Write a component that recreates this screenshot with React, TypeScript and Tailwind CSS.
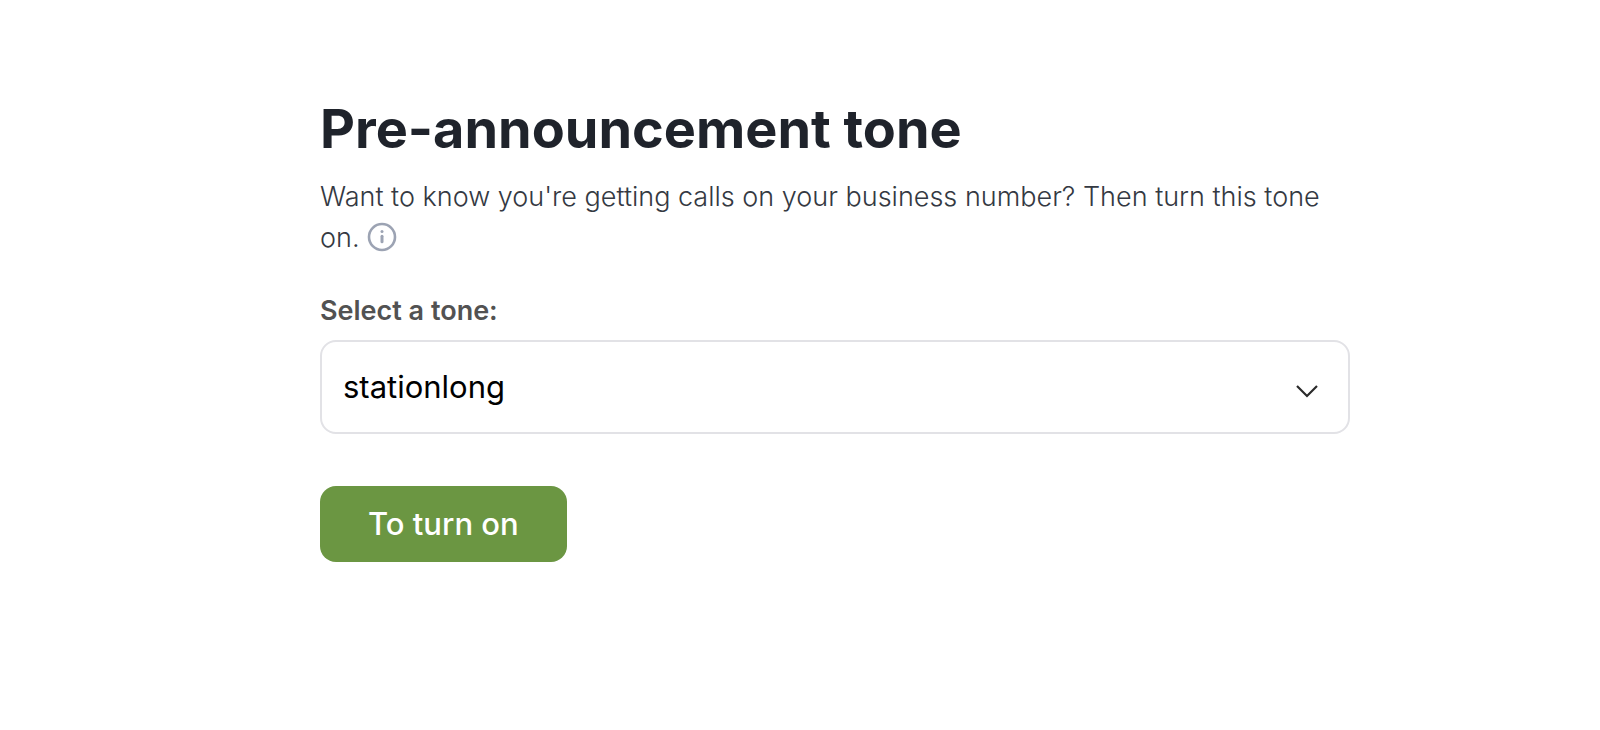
export default function App() {
  return (
    <main className="min-h-screen bg-white pt-[95px] pl-[20%] pr-[250px] font-['Inter',sans-serif]">
      <h1 className="text-[54px] leading-[68px] font-bold text-[#1f232b]">Pre-announcement tone</h1>
      <p className="mt-[13px] text-[27px] leading-[41px] font-light text-[#343942]">
        Want to know you're getting calls on your business number? Then turn this tone on.{' '}
        <button type="button" aria-label="More information" className="inline-block align-[-5px]">
          <svg width="30" height="30" viewBox="0 0 30 30" fill="none" stroke="#9ca3b3">
            <circle cx="15" cy="15" r="13" strokeWidth="2.6" />
            <path d="M15 14.3v5.4" strokeWidth="3" strokeLinecap="round" />
            <circle cx="15" cy="9.5" r="1.5" fill="#9ca3b3" stroke="none" />
          </svg>
        </button>
      </p>
      <label htmlFor="tone" className="mt-[33px] block text-[27px] leading-[40px] font-semibold text-[#525252]">Select a tone:</label>
      <div className="relative mt-[9px]">
        <select id="tone" className="block h-[94px] w-full appearance-none rounded-2xl border-2 border-[#e2e2e6] bg-white px-[21px] text-[31px] text-black">
          <option>stationlong</option>
        </select>
        <svg className="pointer-events-none absolute top-[44px] right-[31px]" width="24" height="16" viewBox="0 0 24 16" fill="none" stroke="#2b2b2b" strokeWidth="2.2">
          <path d="M2 2l10 10L22 2" />
        </svg>
      </div>
      <button type="button" className="mt-[52px] h-[76px] rounded-2xl bg-[#6b9642] px-12 text-[31px] font-medium text-white">To turn on</button>
    </main>
  );
}
